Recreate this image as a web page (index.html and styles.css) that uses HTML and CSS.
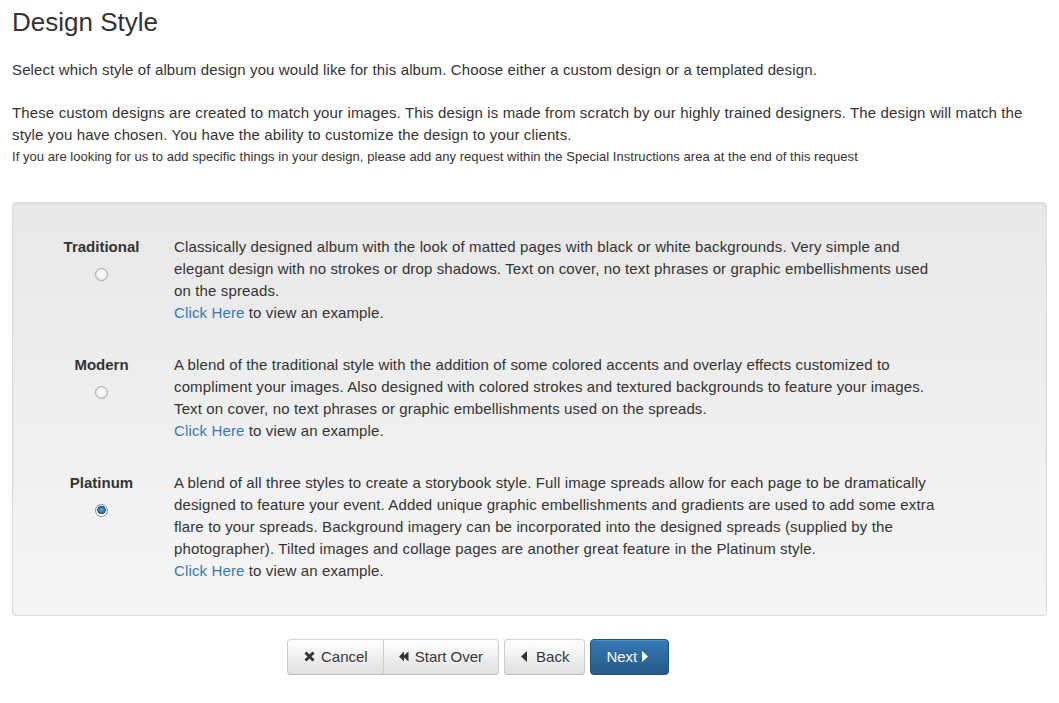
FILE: index.html
```html
<!DOCTYPE html>
<html lang="en">
<head>
  <meta charset="UTF-8">
  <title>Design Style</title>
  <link rel="stylesheet" href="styles.css">
</head>
<body>

<div class="container">
  <h1>Design Style</h1>

  <p class="intro">Select which style of album design you would like for this album. Choose either a custom design or a templated design.</p>

  <p class="custom">These custom designs are created to match your images. This design is made from scratch by our highly trained designers. The design will match the style you have chosen. You have the ability to customize the design to your clients.</p>
  <p class="small-note">If you are looking for us to add specific things in your design, please add any request within the Special Instructions area at the end of this request</p>

  <div class="well">
    <div class="style-row">
      <label class="style-label" for="style-traditional">
        <span>Traditional</span>
        <input type="radio" name="design-style" id="style-traditional" class="radio">
      </label>
      <div class="style-desc">
        Classically designed album with the look of matted pages with black or white backgrounds. Very simple and elegant design with no strokes or drop shadows. Text on cover, no text phrases or graphic embellishments used on the spreads.<br>
        <a href="#">Click Here</a> to view an example.
      </div>
    </div>

    <div class="style-row">
      <label class="style-label" for="style-modern">
        <span>Modern</span>
        <input type="radio" name="design-style" id="style-modern" class="radio">
      </label>
      <div class="style-desc">
        A blend of the traditional style with the addition of some colored accents and overlay effects customized to compliment your images. Also designed with colored strokes and textured backgrounds to feature your images. Text on cover, no text phrases or graphic embellishments used on the spreads.<br>
        <a href="#">Click Here</a> to view an example.
      </div>
    </div>

    <div class="style-row">
      <label class="style-label" for="style-platinum">
        <span>Platinum</span>
        <input type="radio" name="design-style" id="style-platinum" class="radio" checked>
      </label>
      <div class="style-desc">
        A blend of all three styles to create a storybook style. Full image spreads allow for each page to be dramatically designed to feature your event. Added unique graphic embellishments and gradients are used to add some extra flare to your spreads. Background imagery can be incorporated into the designed spreads (supplied by the photographer). Tilted images and collage pages are another great feature in the Platinum style.<br>
        <a href="#">Click Here</a> to view an example.
      </div>
    </div>
  </div>

  <div class="actions">
    <div class="btn-group">
      <button class="btn">
        <svg class="icon icon-remove" viewBox="0 0 13 12"><path d="M1.5 2.5 L3.5 0.5 L6.5 3.5 L9.5 0.5 L11.5 2.5 L8.5 5.5 L11.5 8.5 L9.5 10.5 L6.5 7.5 L3.5 10.5 L1.5 8.5 L4.5 5.5 Z"/></svg>Cancel
      </button>
      <button class="btn">
        <svg class="icon icon-backward" viewBox="0 0 10 12"><path d="M0 5.5 L5 0.5 L5 10.5 Z M4 5.5 L9.5 0.5 L9.5 10.5 Z"/></svg>Start Over
      </button>
    </div>
    <button class="btn">
      <svg class="icon icon-back" viewBox="0 0 8 12"><path d="M1 5.5 L7 0 L7 11 Z"/></svg>Back
    </button>
    <button class="btn btn-primary">
      Next<svg class="icon icon-next" viewBox="0 0 8 12"><path d="M1 0 L7 5.5 L1 11 Z"/></svg>
    </button>
  </div>
</div>

</body>
</html>
```

FILE: styles.css
```css
body {
  margin: 0;
  font-family: "Liberation Sans", Arial, sans-serif;
  font-size: 15px;
  line-height: 22px;
  letter-spacing: 0.13px;
  color: #333;
  background-color: #fff;
}

.container {
  padding: 0 12px;
}

h1 {
  font-size: 26px;
  font-weight: normal;
  line-height: 28px;
  letter-spacing: 0;
  margin: 8px 0 23px;
  color: #333;
}

p {
  margin: 0;
}

.intro {
  margin-bottom: 21px;
}

.small-note {
  font-size: 13px;
  letter-spacing: 0.05px;
}

a {
  color: #337ab7;
  text-decoration: none;
}

.well {
  margin-top: 34px;
  padding: 18px 19px 18px;
  border: 1px solid #dcdcdc;
  border-radius: 4px;
  background-color: #f5f5f5;
  background-image: linear-gradient(to bottom, #e8e8e8 0, #f5f5f5 100%);
  box-shadow: inset 0 1px 3px rgba(0, 0, 0, 0.05), 0 1px 0 rgba(255, 255, 255, 0.1);
}

.style-row {
  display: flex;
  align-items: flex-start;
  padding: 15px 0;
}

.style-label {
  width: 139px;
  flex-shrink: 0;
  display: flex;
  flex-direction: column;
  align-items: center;
  font-weight: bold;
  letter-spacing: 0;
}

.style-desc {
  width: 772px;
  margin-left: 3px;
}

.radio {
  -webkit-appearance: none;
  appearance: none;
  width: 13px;
  height: 13px;
  margin: 10px 0 0;
  border: 1px solid #a6a6a6;
  border-radius: 50%;
  background: radial-gradient(circle at 50% 45%, #fff 0, #f4f4f4 45%, #dcdcdc 100%);
  box-sizing: border-box;
  cursor: pointer;
}

.radio:checked {
  background: radial-gradient(circle at 50% 45%, #59b4e8 0, #1f77b8 35%, #174e7c 48%, #fff 56%, #eaeaea 100%);
  border-color: #8a8a8a;
}

.actions {
  display: flex;
  gap: 5px;
  margin: 23px 0 0 275px;
}

.btn-group {
  display: flex;
}

.btn {
  display: inline-flex;
  align-items: center;
  height: 36px;
  padding: 6px 15px;
  font-family: inherit;
  font-size: 15px;
  line-height: 22px;
  letter-spacing: 0;
  color: #333;
  background-color: #e0e0e0;
  background-image: linear-gradient(to bottom, #fff 0, #e0e0e0 100%);
  border: 1px solid #ccc;
  border-color: #d4d4d4 #ccc #bdbdbd;
  border-radius: 4px;
  text-shadow: 0 1px 0 #fff;
  box-shadow: inset 0 1px 0 rgba(255, 255, 255, 0.15), 0 1px 1px rgba(0, 0, 0, 0.075);
  cursor: pointer;
}

.btn-group .btn:first-child {
  border-top-right-radius: 0;
  border-bottom-right-radius: 0;
}

.btn-group .btn + .btn {
  margin-left: -1px;
  border-top-left-radius: 0;
  border-bottom-left-radius: 0;
}

.btn-primary {
  color: #fff;
  background-color: #265a88;
  background-image: linear-gradient(to bottom, #337ab7 0, #265a88 100%);
  border-color: #245580;
  text-shadow: 0 -1px 0 rgba(0, 0, 0, 0.2);
}

.icon {
  height: 12px;
  fill: #333;
  flex-shrink: 0;
}

.icon-remove {
  width: 13px;
  margin-right: 5px;
}

.icon-backward {
  width: 10px;
  margin-right: 6px;
}

.icon-back {
  width: 8px;
  margin-right: 8px;
}

.icon-next {
  width: 8px;
  margin: 0 4px 0 4px;
  fill: #fff;
}
```
